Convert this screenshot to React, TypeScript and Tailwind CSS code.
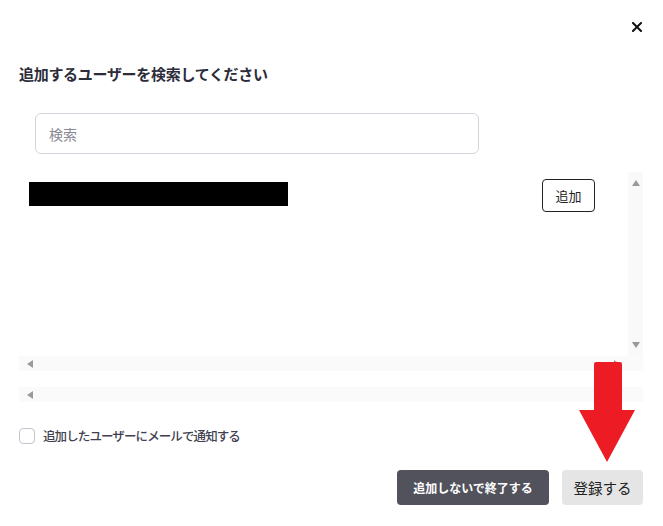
import { useState } from 'react';

function ArrowLeft() {
  return (
    <svg width="6" height="8" viewBox="0 0 6 8" className="block">
      <polygon points="6,0 6,8 0,4" fill="#9a9a9a" />
    </svg>
  );
}

function ArrowRight() {
  return (
    <svg width="6" height="8" viewBox="0 0 6 8" className="block">
      <polygon points="0,0 0,8 6,4" fill="#9a9a9a" />
    </svg>
  );
}

function HScroll({ right }: { right?: boolean }) {
  return (
    <div className="flex h-[15px] items-center justify-between bg-[#fafafa] pl-[8px] pr-[23px]">
      <ArrowLeft />
      {right && <ArrowRight />}
    </div>
  );
}

export default function App() {
  const [notify, setNotify] = useState(false);

  return (
    <div
      className="relative h-[526px] w-[663px] overflow-hidden bg-white"
      style={{ fontFamily: '"Noto Sans CJK JP", "Noto Sans", sans-serif' }}
    >
      <div className="flex justify-end pr-[21px] pt-[22px]">
        <button className="block h-[10px] w-[10px]">
          <svg width="10" height="10" viewBox="0 0 10 10" className="block">
            <path d="M1 1 L9 9 M9 1 L1 9" stroke="#111" strokeWidth="2" strokeLinecap="square" />
          </svg>
        </button>
      </div>

      <h2 className="ml-[19px] mt-[31px] text-[15px] font-bold leading-[22px] tracking-[-0.3px] text-[#2d2d3a]">
        追加するユーザーを検索してください
      </h2>

      <div className="ml-[35px] mt-[28px] w-[444px]">
        <input
          type="text"
          placeholder="検索"
          className="h-[41px] w-full rounded-[6px] border border-[#d4d4dc] px-[13px] text-[14px] text-[#333] placeholder:text-[#8a8a94] focus:outline-none"
        />
      </div>

      {/* user list */}
      <div className="ml-[19px] mr-[20px] mt-[18px]">
        <div className="flex h-[184px]">
          <div className="flex-1 pl-[10px] pr-[33px] pt-[7px]">
            <div className="flex items-start justify-between">
              <div className="mt-[3px] h-[24px] w-[259px] bg-black" />
              <button className="h-[33px] w-[53px] rounded-[4px] border border-[#222] bg-white text-[13px] text-[#222]">
                追加
              </button>
            </div>
          </div>
          <div className="flex w-[15px] flex-col items-center justify-between bg-[#f9f9f9] py-[8px]">
            <svg width="8" height="6" viewBox="0 0 8 6" className="block">
              <polygon points="0,6 8,6 4,0" fill="#9a9a9a" />
            </svg>
            <svg width="8" height="6" viewBox="0 0 8 6" className="block">
              <polygon points="0,0 8,0 4,6" fill="#9a9a9a" />
            </svg>
          </div>
        </div>
        <HScroll right />
        <div className="mt-[16px]">
          <HScroll />
        </div>
      </div>

      <label className="ml-[19px] mt-[26px] flex w-fit items-center gap-[8px]">
        <input
          type="checkbox"
          checked={notify}
          onChange={(e) => setNotify(e.target.checked)}
          className="h-[16px] w-[16px] appearance-none rounded-[4px] border border-[#c4c4d0] bg-white"
        />
        <span className="text-[12.5px] font-medium leading-[16px] tracking-[-0.9px] text-[#3f3f4f]">
          追加したユーザーにメールで通知する
        </span>
      </label>

      <div className="mr-[20px] mt-[26px] flex justify-end gap-[13px]">
        <button className="h-[35px] w-[152px] rounded-[4px] bg-[#52525c] text-[12px] font-bold text-white">
          追加しないで終了する
        </button>
        <button className="h-[35px] w-[81px] rounded-[4px] bg-[#e5e5e5] text-[14.5px] text-[#222]">
          登録する
        </button>
      </div>

      {/* annotation arrow */}
      <svg
        width="56"
        height="100"
        viewBox="0 0 56 100"
        className="absolute left-[579px] top-[362px]"
      >
        <path d="M15 2 Q15 0 17 0 L41 0 Q43 0 43 2 L43 48 L56 48 L28 100 L0 48 L15 48 Z" fill="#ed1c24" />
      </svg>
    </div>
  );
}
